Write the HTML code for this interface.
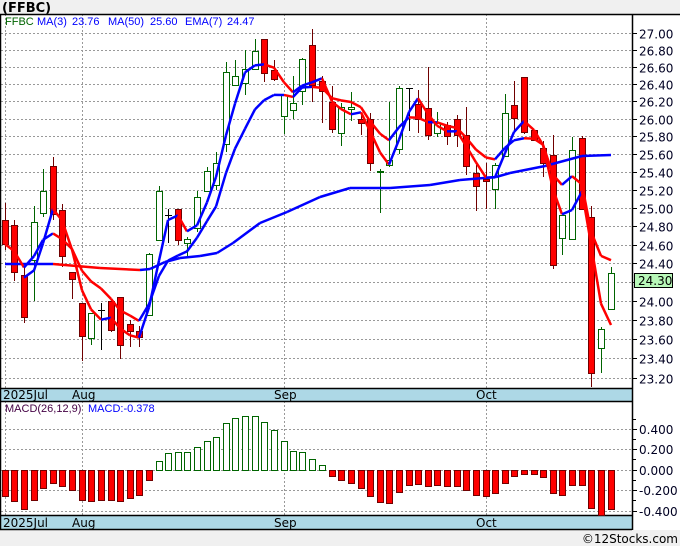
<!DOCTYPE html>
<html><head><meta charset="utf-8"><style>
html,body{margin:0;padding:0;background:#f0f0f0;}
body{width:680px;height:546px;overflow:hidden;font-family:"Liberation Sans",sans-serif;}
svg{display:block}
</style></head><body>
<svg id="s" width="680" height="546" xmlns="http://www.w3.org/2000/svg" font-family="DejaVu Sans, sans-serif">
<rect x="0" y="0" width="680" height="546" fill="#f0f0f0"/>
<text x="2" y="12" font-size="13" font-weight="bold" fill="#000">(FFBC)</text>
<rect x="0" y="14" width="680" height="516" fill="#fff"/>
<g id="g"></g>
<text x="678" y="543" font-size="12" text-anchor="end" fill="#000">©12Stocks.com</text>
</svg>
<script>
var g=document.getElementById('g');var h='';
function L(x1,y1,x2,y2,c,w,d){h+='<line x1="'+x1+'" y1="'+y1+'" x2="'+x2+'" y2="'+y2+'" stroke="'+c+'" stroke-width="'+(w||1)+'"'+(d?' stroke-dasharray="'+d+'"':'')+'/>';}
function R(x,y,w,hh,f,s){h+='<rect x="'+x+'" y="'+y+'" width="'+w+'" height="'+hh+'" fill="'+f+'"'+(s?' stroke="'+s+'" stroke-width="1"':'')+'/>';}
function T(x,y,t,c,sz,a,ff){h+='<text x="'+x+'" y="'+y+'" font-size="'+(sz||12)+'" fill="'+c+'"'+(a?' text-anchor="'+a+'"':'')+(ff?' font-family="'+ff+'"':'')+'>'+t+'</text>';}
var LS='Liberation Sans, sans-serif';
for(var i=0;i<=19;i++){var p=27-i*0.2;var y=Math.round(33+(Math.log(27)-Math.log(p))*2274)+0.5;
 L(1,y,632,y,'#999',1,'2,2');L(632,y,637,y,'#000');
 if(Math.abs(p-24.2)>0.01) T(639,y+5,p.toFixed(2),'#000022',12);}
[5,82,284,486].forEach(function(x){L(x+0.5,14,x+0.5,388,'#999',1,'2,2');L(x+0.5,401,x+0.5,515,'#999',1,'2,2');});
var C=[[5,'r',220,244,203,250],[14,'r',225,272,220,281],[24,'r',275,317,266,323],[34,'g',222,260,206,301],[43,'g',191,213,169,217],[53,'r',166,214,157,220],[62,'r',210,256,204,267],[72,'r',272,279,272,299],[82,'r',303,336,303,361],[91,'g',313,338,313,345],[101,'k',310,310,303,350],[111,'r',301,330,301,332],[120,'r',297,345,297,359],[130,'r',324,331,320,347],[139,'r',331,337,326,347],[149,'g',254,315,253,316],[159,'g',191,240,186,240],[168,'k',215,215,209,243],[178,'r',209,240,209,245],[187,'g',239,243,237,257],[197,'g',197,228,191,232],[207,'g',171,191,167,191],[216,'g',163,185,152,190],[226,'g',72,144,62,152],[235,'g',76,85,60,85],[245,'g',69,83,50,95],[255,'g',51,69,39,69],[264,'r',39,73,39,82],[274,'r',70,79,60,81],[284,'g',95,116,95,134],[293,'g',103,110,76,119],[302,'g',59,91,58,105],[312,'r',45,85,29,102],[322,'r',81,91,76,123],[332,'r',102,129,86,133],[341,'g',107,133,103,146],[351,'g',107,109,92,121],[361,'r',119,123,113,135],[370,'r',119,163,113,171],[380,'g',171,172,169,213],[389,'g',160,165,102,167],[399,'g',88,149,86,154],[409,'k',88,88,88,131],[418,'r',104,119,90,133],[428,'r',108,135,67,140],[437,'g',123,133,112,137],[447,'r',125,136,122,145],[457,'r',119,135,115,147],[466,'r',135,166,107,175],[476,'r',173,186,165,211],[486,'r',179,181,163,209],[495,'g',165,189,163,209],[505,'g',113,156,94,156],[514,'r',105,118,81,130],[524,'r',77,132,77,134],[534,'r',130,140,130,141],[543,'r',148,163,141,177],[553,'r',155,265,135,269],[562,'g',215,238,215,255],[572,'g',150,239,137,239],[582,'r',138,209,136,209],[591,'r',217,373,206,387],[601,'g',329,348,327,373],[611,'g',273,309,267,309]];
var cl=[];
C.forEach(function(c){var x=c[0];var col=c[1]=='g'?'#006400':(c[1]=='r'?'#700000':'#000');
 L(x+0.5,c[4],x+0.5,c[5],col,1);
 if(c[1]=='k'){L(x-3,c[2]+0.5,x+4,c[2]+0.5,'#000',1);}
 else R(x-2.5,c[2]+0.5,6,Math.max(1,c[3]-c[2]),c[1]=='g'?'#fff':'#ff0000',col);
 cl.push(c[1]=='r'?c[3]:c[2]);});
function seg(pts,w){for(var i=1;i<pts.length;i++){var a=pts[i-1],b=pts[i];L(a[0],a[1],b[0],b[1],b[1]>a[1]+0.3?'#ff0000':'#0000ff',w);}}
var ma3=[],ema=[],e=cl[0];
for(var i=0;i<cl.length;i++){e=i==0?cl[0]:e+0.25*(cl[i]-e);ema.push([C[i][0],e]);if(i>=2)ma3.push([C[i][0],(cl[i]+cl[i-1]+cl[i-2])/3]);}
var ma50=[[5,264],[53,264],[100,268],[140,270],[150,269],[165,262],[180,258],[200,256],[217,253],[233,243],[260,223],[287,212],[320,197],[350,188],[390,188],[430,185],[460,180],[496,177],[510,173],[545,166],[582,156],[611,155]];
seg(ma50,2.5);seg(ema,2.5);seg(ma3,2.5);
R(634.5,273.5,38,14,'#b8f8b8','#000');T(638,285,'24.30','#000',12);
T(5,25,'FFBC','#006400',11,0,LS);T(37,25,'MA(3)','#0000ff',11,0,LS);T(72,25,'23.76','#0000ff',11,0,LS);T(108,25,'MA(50)','#0000ff',11,0,LS);T(150,25,'25.60','#0000ff',11,0,LS);T(185,25,'EMA(7)','#0000ff',11,0,LS);T(227,25,'24.47','#0000ff',11,0,LS);
R(0,388,632,13,'#add8e6');R(0,515,632,14,'#add8e6');
L(0,388.5,632,388.5,'#000',1.5);L(0,401.5,632,401.5,'#000',1.5);L(0,515.5,632,515.5,'#000',1.5);L(0,529.5,632,529.5,'#000',1.5);
[['2025Jul',3],['Aug',72],['Sep',274],['Oct',476]].forEach(function(d){T(d[1],399,d[0],'#000',12);T(d[1],527,d[0],'#000',12);});
[[0.4,429],[0.2,449],[0,470],[-0.2,490],[-0.4,511]].forEach(function(m){L(1,m[1]+0.5,632,m[1]+0.5,'#999',1,'2,2');L(632,m[1]+0.5,637,m[1]+0.5,'#000');T(639,m[1]+5,(m[0]<0?'-':'')+Math.abs(m[0]).toFixed(3),'#000022',12);});
[419,439,459,480,500].forEach(function(y){L(632,y+0.5,636,y+0.5,'#000');});
var M=[26,31,39,30,18,13,16,20,30,31,30,30,31,28,25,10,-9,-17,-18,-18,-23,-29,-33,-47,-52,-54,-54,-48,-40,-29,-19,-18,-11,-5,6,10,13,18,26,32,33,22,15,14,16,15,16,16,20,25,26,23,13,6,4,4,7,23,25,15,15,38,45,39];
M.forEach(function(v,i){var x=C[i][0]-2.5;if(v>0)R(x,470.5,6,v,'#ff0000','#700000');else R(x,470.5+v,6,-v,'#fff','#006400');});
T(5,412,'MACD(26,12,9)','#440044',11,0,LS);T(88,412,'MACD:-0.378','#0000ff',11,0,LS);
L(632.5,14,632.5,530,'#000',1.5);L(0,14.5,680,14.5,'#000',1.5);L(0.5,14,0.5,530,'#000',1.5);
g.innerHTML=h;
</script>
</body></html>
